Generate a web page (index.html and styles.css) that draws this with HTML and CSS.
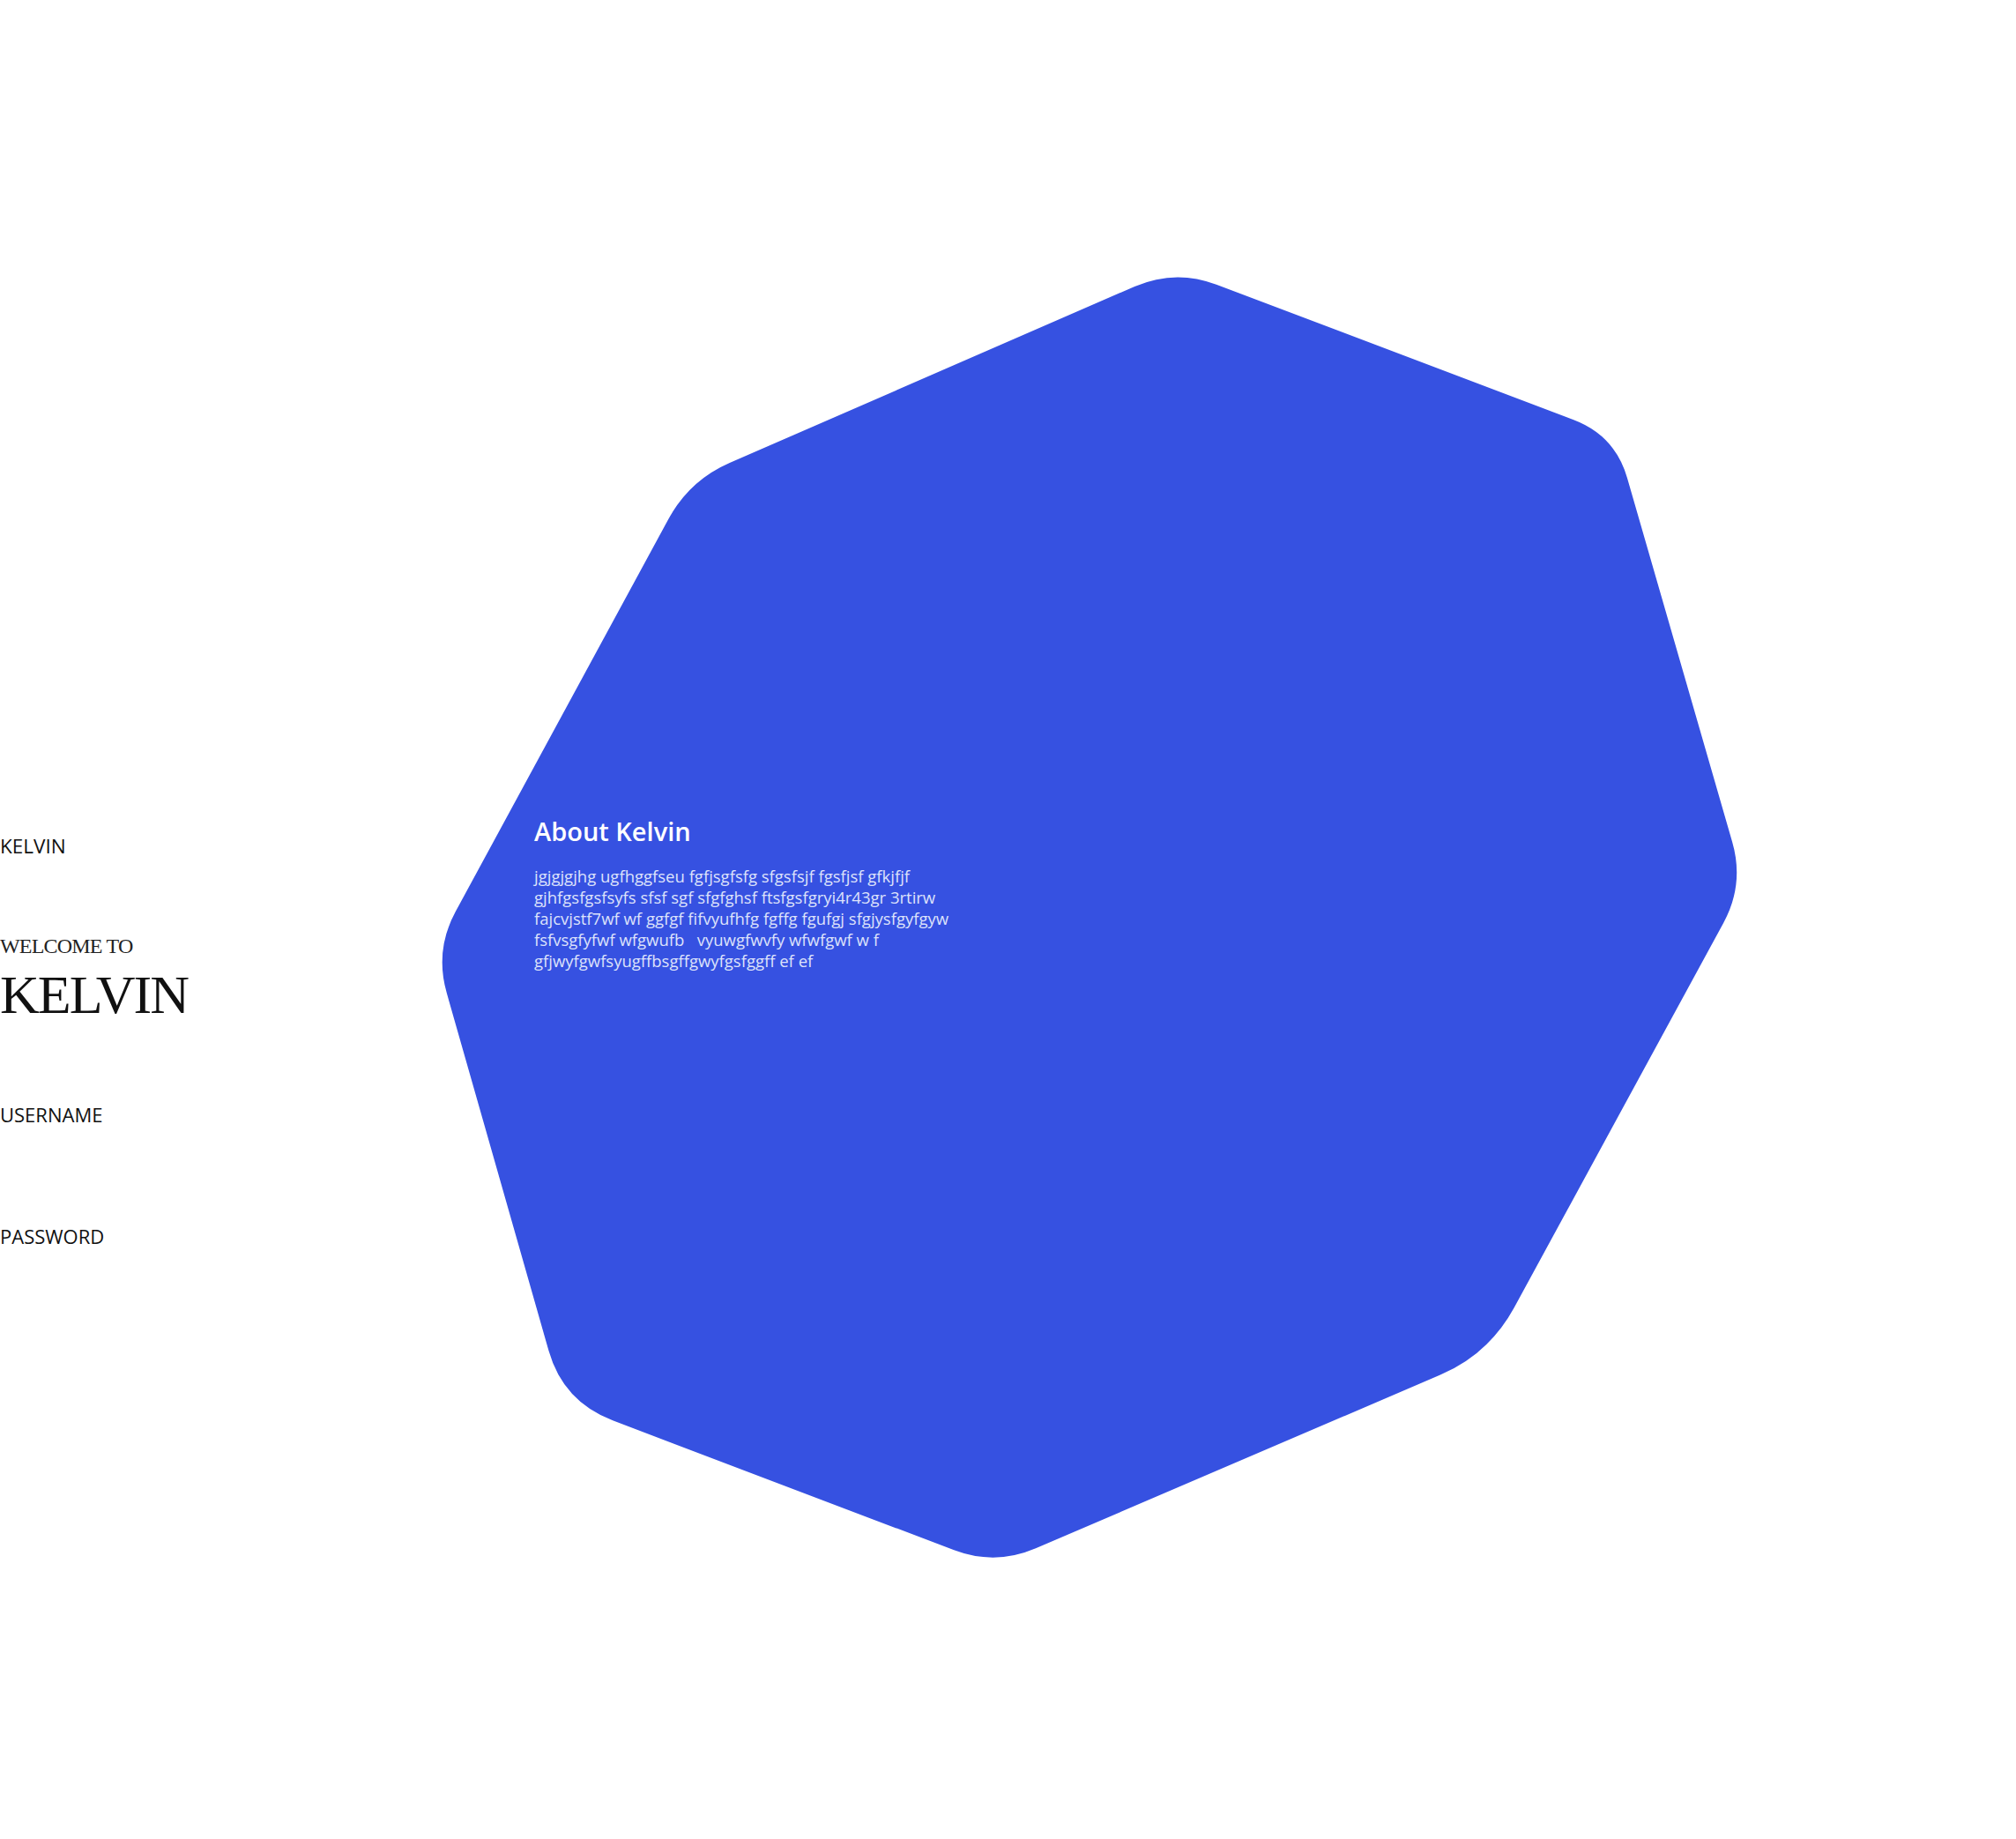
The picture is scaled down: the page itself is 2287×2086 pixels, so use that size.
FILE: index.html
```html
<!DOCTYPE html>
<html lang="en">
<head>
  <meta charset="UTF-8">
  <meta name="viewport" content="width=device-width, initial-scale=1.0">
  <title>Kelvin</title>
  <link rel="stylesheet" href="styles.css">
</head>
<body>
  <div class="page">
    <!-- Login column -->
    <div class="login">
      <p class="brand">KELVIN</p>
      <p class="welcome">WELCOME TO</p>
      <h1 class="title">KELVIN</h1>
      <label class="field-label" for="username">USERNAME</label>
      <label class="field-label field-password" for="password">PASSWORD</label>
    </div>

    <!-- About panel -->
    <div class="about">
      <svg class="about-shape" viewBox="0 0 1486 1471" width="1486" height="1471" aria-hidden="true">
        <path d="M886.8 17.7 L1292.2 171.3 Q1339 189 1352.9 237 L1472.1 650 Q1486 698 1462.1 741.9 L1224.7 1178.3 Q1196 1231 1140.9 1254.6 L682 1451.3 Q636 1471 589.3 1453.3 L202.2 1306.3 Q146 1285 129.5 1227.3 L13.7 821.1 Q0 773 23.8 729 L265.2 284 Q289 240 334.8 220 L794.2 20 Q840 0 886.8 17.7 Z" fill="#3651e1"/>
      </svg>
      <div class="about-text">
        <h2>About Kelvin</h2>
        <p>jgjgjgjhg ugfhggfseu fgfjsgfsfg sfgsfsjf fgsfjsf gfkjfjf gjhfgsfgsfsyfs sfsf sgf sfgfghsf ftsfgsfgryi4r43gr 3rtirw fajcvjstf7wf wf ggfgf fifvyufhfg fgffg fgufgj sfgjysfgyfgyw fsfvsgfyfwf wfgwufb &nbsp; vyuwgfwvfy wfwfgwf w f gfjwyfgwfsyugffbsgffgwyfgsfggff ef ef</p>
      </div>
    </div>
  </div>
</body>
</html>
```

FILE: styles.css
```css
/* General Reset */
* {
  margin: 0;
  padding: 0;
  box-sizing: border-box;
}

body {
  font-family: 'Open Sans', 'Noto Sans', sans-serif;
  background: #fff;
  color: #111;
}

.page {
  display: flex;
  align-items: flex-start;
  min-height: 2086px;
}

/* Login column */
.login {
  width: 493px;
  flex-shrink: 0;
  padding-top: 949px;
  display: flex;
  flex-direction: column;
  align-items: flex-start;
}

.brand {
  font-size: 22.5px;
  line-height: 1;
}

.welcome {
  margin-top: 89px;
  font-family: 'Liberation Serif', serif;
  font-size: 24px;
  line-height: 1;
  letter-spacing: -0.8px;
  color: #222;
}

.title {
  margin-top: 12px;
  font-family: 'Liberation Serif', serif;
  font-weight: normal;
  font-size: 62px;
  line-height: 1;
  letter-spacing: -2px;
}

.field-label {
  display: block;
  margin-top: 94px;
  font-size: 22px;
  line-height: 1;
  color: #111;
}

.field-password {
  margin-top: 116px;
}

/* About panel */
.about {
  position: relative;
  margin-top: 305px;
  width: 1486px;
  height: 1471px;
}

.about-shape {
  position: absolute;
  top: 0;
  left: 0;
}

.about-text {
  position: relative;
  padding: 623px 0 0 113px;
  width: 620px;
  color: #fff;
}

.about-text h2 {
  font-size: 29px;
  font-weight: 600;
  line-height: 1;
}

.about-text p {
  margin-top: 25px;
  width: 500px;
  font-size: 18.5px;
  line-height: 24px;
  color: #dde2fb;
}
```
